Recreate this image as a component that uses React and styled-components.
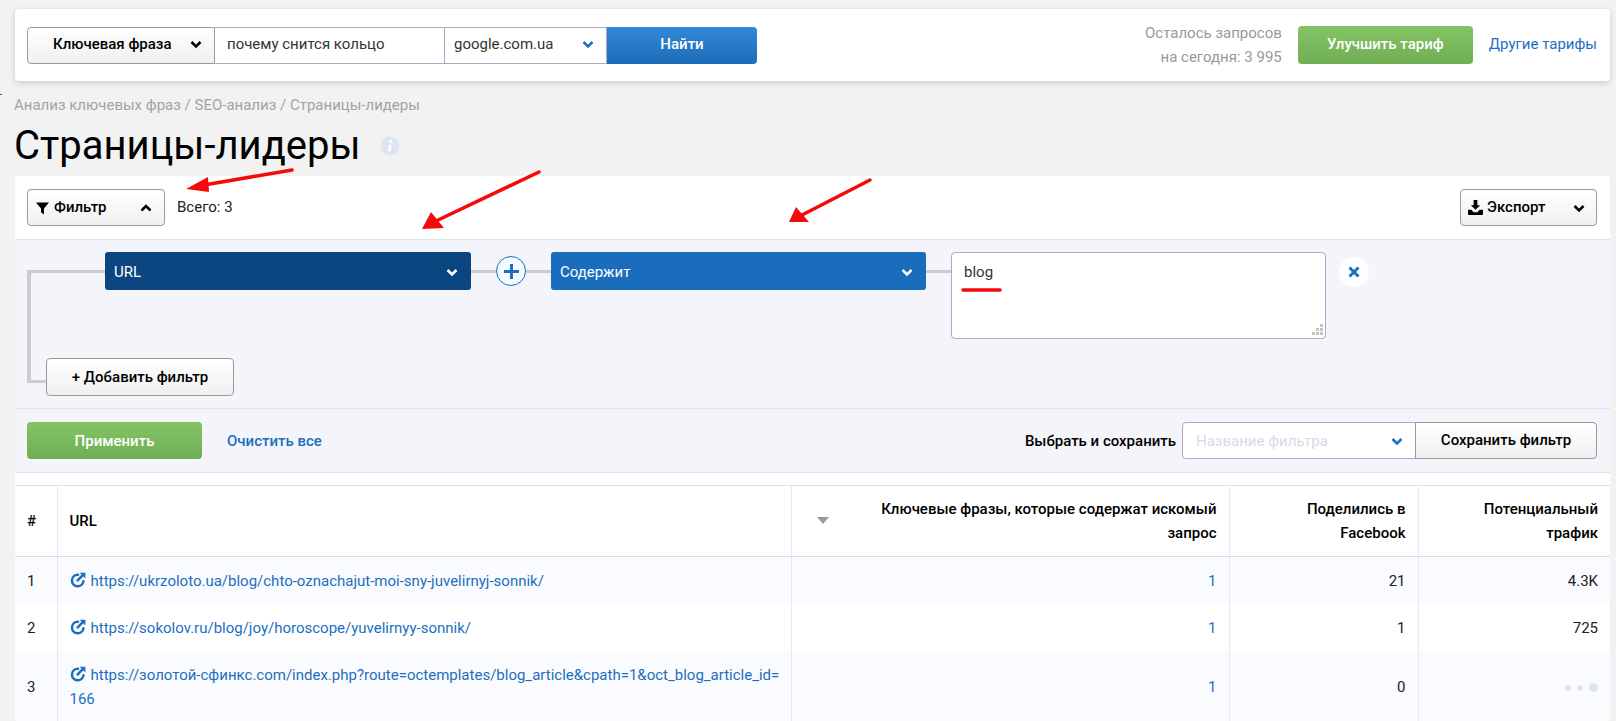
import React from 'react'
import styled, { createGlobalStyle, css } from 'styled-components'

const GlobalStyle = createGlobalStyle`
  html, body {
    margin: 0;
    height: 721px;
    overflow: hidden;
    background: #f2f2f2;
    font-family: Roboto, "Liberation Sans", sans-serif;
    font-size: 15px;
    color: #000;
  }
  * { box-sizing: border-box; }
`

const Page = styled.div`
  position: relative;
  height: 721px;
  padding: 9px 6px 0 15px;
  overflow: hidden;
`

const Tick = styled.i`
  position: absolute;
  left: 0;
  top: 94px;
  width: 2px;
  height: 1px;
  background: #1c6fbf;
`

const TopBar = styled.header`
  display: flex;
  align-items: center;
  height: 72px;
  padding: 0 13px 0 12px;
  background: #fff;
  border-radius: 4px;
  box-shadow: 0 2px 6px rgba(0, 0, 0, 0.16);
`

const SearchGroup = styled.div`
  display: flex;
  height: 37px;
`

const buttonBase = css`
  display: flex;
  align-items: center;
  background: linear-gradient(#fff, #f0f0f0);
  border: 1px solid #9a9a9a;
  border-radius: 4px;
  font-weight: 500;
  color: #000;
`

const TypeSelect = styled.div`
  ${buttonBase}
  width: 188px;
  padding: 0 12px 2px 25px;
  justify-content: space-between;
  border-radius: 4px 0 0 4px;
`

const fieldBase = css`
  display: flex;
  align-items: center;
  background: #fff;
  border: 1px solid #a7acc4;
  border-left: 0;
`

const QueryField = styled.div`
  ${fieldBase}
  width: 230px;
  padding: 0 0 2px 12px;
  color: #333;
`

const EngineSelect = styled.div`
  ${fieldBase}
  width: 162px;
  padding: 0 12px 2px 9px;
  justify-content: space-between;
  color: #333;
`

const greenGradient = 'linear-gradient(#84c365, #6fae53)'

const FindButton = styled.div`
  display: flex;
  align-items: center;
  justify-content: center;
  width: 150px;
  padding-bottom: 2px;
  background: linear-gradient(#3488d8, #1c6cb8);
  border-radius: 0 4px 4px 0;
  color: #fff;
  font-weight: 500;
`

const TopRight = styled.div`
  display: flex;
  align-items: center;
  margin-left: auto;
`

const Quota = styled.div`
  text-align: right;
  line-height: 24px;
  color: #999;
`

const UpgradeButton = styled.div`
  display: flex;
  align-items: center;
  justify-content: center;
  width: 175px;
  height: 38px;
  margin: 0 16px 0 16px;
  padding-bottom: 2px;
  background: ${greenGradient};
  border-radius: 4px;
  color: #fff;
  font-weight: 500;
`

const PlansLink = styled.span`
  margin-bottom: 2px;
  color: #1c6fbf;
`

const Breadcrumbs = styled.div`
  margin: 14px 0 0 -1px;
  line-height: 20px;
  color: #a3a3a3;
`

const TitleRow = styled.div`
  display: flex;
  align-items: center;
  height: 54px;
  margin: 4px 0 3px -1px;
`

const Title = styled.h1`
  margin: 0 19px 0 0;
  font-size: 40px;
  font-weight: 400;
  line-height: 44px;
`

const Card = styled.section`
  height: 545px;
  background: #fff;
  border-radius: 4px;
  overflow: hidden;
`

const CardHead = styled.div`
  display: flex;
  align-items: center;
  height: 63px;
  padding: 0 13px 0 12px;
`

const DropButton = styled.div`
  ${buttonBase}
  width: ${props => props.$width}px;
  height: 37px;
  padding: 0 ${props => props.$right}px 0 ${props => props.$left}px;
`

const DropLabel = styled.span`
  flex: 1;
  margin: 0 0 2px ${props => props.$gap}px;
`

const Total = styled.span`
  margin: 0 0 2px 12px;
  color: #222;
`

const HeadSpacer = styled.div`
  flex: 1;
`

const FilterPanel = styled.div`
  background: #f3f5fa;
  border-top: 1px solid #dde4f0;
  border-bottom: 1px solid #dde4f0;
`

const FilterBody = styled.div`
  position: relative;
  height: 169px;
  padding: 12px 0 0 90px;
  border-bottom: 1px solid #dde4f0;

  &::before {
    content: '';
    position: absolute;
    left: 12px;
    top: 30px;
    width: 80px;
    height: 3px;
    background: #ccc;
  }

  &::after {
    content: '';
    position: absolute;
    left: 12px;
    top: 30px;
    width: 20px;
    height: 110px;
    border-left: 4px solid #ccc;
    border-bottom: 3px solid #ccc;
  }
`

const RuleRow = styled.div`
  display: flex;
  align-items: flex-start;
  position: relative;
  z-index: 1;
`

const RuleSelect = styled.div`
  display: flex;
  align-items: center;
  justify-content: space-between;
  width: ${props => props.$width}px;
  height: 38px;
  padding: 1px 13px 0 9px;
  background: ${props => props.$color};
  border-radius: 3px;
  color: #fff;
`

const Dash = styled.div`
  flex: none;
  width: ${props => props.$width}px;
  height: 3px;
  margin-top: 18px;
  background: #ccc;
`

const PlusButton = styled.div`
  display: flex;
  align-items: center;
  justify-content: center;
  flex: none;
  width: 30px;
  height: 30px;
  margin-top: 4px;
  background: #f4faff;
  border: 1px solid #1c6fbf;
  border-radius: 50%;
`

const ValueBox = styled.div`
  position: relative;
  width: 375px;
  height: 87px;
  padding: 9px 12px;
  background: #fff;
  border: 1px solid #a7acc4;
  border-radius: 4px;
  line-height: 20px;
  color: #333;
`

const ResizeGrip = styled.svg`
  position: absolute;
  right: 2px;
  bottom: 2px;
`

const RemoveButton = styled.div`
  display: flex;
  align-items: center;
  justify-content: center;
  width: 30px;
  height: 30px;
  margin: 5px 0 0 13px;
  background: #fff;
  border-radius: 50%;
`

const AddFilter = styled.div`
  ${buttonBase}
  position: absolute;
  left: 31px;
  top: 118px;
  z-index: 1;
  justify-content: center;
  width: 188px;
  height: 38px;
`

const FilterFooter = styled.div`
  display: flex;
  align-items: center;
  height: 63px;
  padding: 0 13px 0 12px;
`

const ApplyButton = styled.div`
  display: flex;
  align-items: center;
  justify-content: center;
  width: 175px;
  height: 37px;
  background: ${greenGradient};
  border-radius: 4px;
  color: #fff;
  font-weight: 500;
`

const ClearLink = styled.span`
  margin-left: 25px;
  color: #1c6fbf;
  font-weight: 500;
`

const SaveLabel = styled.span`
  margin: 0 6px 0 auto;
  font-weight: 500;
`

const SaveGroup = styled.div`
  display: flex;
  height: 37px;
`

const FilterName = styled.div`
  display: flex;
  align-items: center;
  justify-content: space-between;
  width: 234px;
  padding: 0 12px 0 13px;
  background: #fff;
  border: 1px solid #a7acc4;
  border-radius: 4px 0 0 4px;
  color: #d5dae8;
`

const SaveButton = styled.div`
  ${buttonBase}
  justify-content: center;
  width: 182px;
  margin-left: -1px;
  padding-bottom: 2px;
  border-radius: 0 4px 4px 0;
`

const Table = styled.table`
  width: 100%;
  margin-top: 12px;
  border-collapse: collapse;
  table-layout: fixed;
  border-top: 1px solid #d8dff0;
  line-height: 24px;
`

const Th = styled.th`
  height: 71px;
  padding: 11px 12px;
  border-left: 1px solid #e3e8f4;
  border-bottom: 1px solid #d3dbef;
  font-weight: 500;
  text-align: ${props => props.$align || 'left'};
  vertical-align: middle;

  &:first-child {
    border-left: 0;
  }
`

const SortCell = styled(Th)`
  position: relative;
  padding-left: 48px;
`

const NarrowHead = styled(Th)`
  padding-left: 40px;
`

const SortMark = styled.i`
  position: absolute;
  left: 25px;
  top: 31px;
  border-style: solid;
  border-width: 7px 6px 0;
  border-color: #999 transparent transparent;
`

const Row = styled.tr`
  background: ${props => (props.$odd ? '#fafbfe' : '#fff')};
`

const Td = styled.td`
  padding: 11.5px 12px;
  border-left: 1px solid #e3e8f4;
  text-align: ${props => props.$align || 'left'};
  color: ${props => props.$color || '#222'};

  &:first-child {
    border-left: 0;
  }
`

const UrlCell = styled(Td)`
  padding-right: 6px;
  word-break: break-all;
`

const UrlLink = styled.a`
  color: #1c6fbf;
`

const LinkIcon = styled.svg`
  margin-right: 5px;
  vertical-align: -2px;
`

const LoadingDots = styled.span`
  display: inline-flex;
  align-items: center;
  gap: 6px;
  vertical-align: middle;
`

const Dot = styled.i`
  display: block;
  width: ${props => props.$size}px;
  height: ${props => props.$size}px;
  background: #dfe4f2;
  border-radius: 50%;
`

const Annotations = styled.svg`
  position: absolute;
  left: 0;
  top: 0;
  z-index: 5;
  pointer-events: none;
`

const Chevron = ({ up, color = '#000', size = 12 }) => (
  <svg width={size} height={size} viewBox="0 0 12 12" fill="none">
    <path
      d={up ? 'M1.5 8.5 6 4l4.5 4.5' : 'M1.5 4 6 8.5 10.5 4'}
      stroke={color}
      strokeWidth="2.500"
    />
  </svg>
)

const ExternalIcon = () => (
  <LinkIcon width="16" height="16" viewBox="0 0 15 15" fill="none">
    <path
      d="M7.5 2.6A5.4 5.4 0 1 0 12.6 8.8"
      stroke="#1c6fbf"
      strokeWidth="2.400"
      strokeLinecap="round"
    />
    <path d="M6.5 8.6 12 3" stroke="#1c6fbf" strokeWidth="2.400" />
    <path d="M9 .8h5.4v5.4z" fill="#1c6fbf" />
  </LinkIcon>
)

const rows = [
  { id: 1, url: 'https://ukrzoloto.ua/blog/chto-oznachajut-moi-sny-juvelirnyj-sonnik/', shares: 21, traffic: '4.3K' },
  { id: 2, url: 'https://sokolov.ru/blog/joy/horoscope/yuvelirnyy-sonnik/', shares: 1, traffic: '725' },
  { id: 3, url: 'https://золотой-сфинкс.com/index.php?route=octemplates/blog_article&cpath=1&oct_blog_article_id=166', shares: 0 }
]

const arrows = [
  'M292 170 204 185',
  'M539 172 436 221',
  'M870 180 802 215'
]

export default function App () {
  return (
    <Page>
      <GlobalStyle />
      <Tick />
      <TopBar>
        <SearchGroup>
          <TypeSelect>Ключевая фраза<Chevron /></TypeSelect>
          <QueryField>почему снится кольцо</QueryField>
          <EngineSelect>google.com.ua<Chevron color="#1c6fbf" /></EngineSelect>
          <FindButton>Найти</FindButton>
        </SearchGroup>
        <TopRight>
          <Quota>Осталось запросов<br />на сегодня: 3 995</Quota>
          <UpgradeButton>Улучшить тариф</UpgradeButton>
          <PlansLink>Другие тарифы</PlansLink>
        </TopRight>
      </TopBar>

      <Breadcrumbs>Анализ ключевых фраз / SEO-анализ / Страницы-лидеры</Breadcrumbs>
      <TitleRow>
        <Title>Страницы-лидеры</Title>
        <svg width="20" height="20" viewBox="0 0 20 20">
          <circle cx="10" cy="10" r="9.5" fill="#dfe4f2" />
          <circle cx="10.8" cy="5.6" r="1.6" fill="#fff" />
          <path d="M8 9h3.6l-1.3 5.4h1.2l-.2 1H7.800l1.200-5.400H7.800z" fill="#fff" />
        </svg>
      </TitleRow>

      <Card>
        <CardHead>
          <DropButton $width={138} $left={8} $right={12}>
            <svg width="13" height="14" viewBox="0 0 14 14">
              <path d="M0 1h14L8.600 7.500V14L5.400 11.500V7.500z" fill="#000" />
            </svg>
            <DropLabel $gap={5}>Фильтр</DropLabel>
            <Chevron up />
          </DropButton>
          <Total>Всего: 3</Total>
          <HeadSpacer />
          <DropButton $width={137} $left={7} $right={11}>
            <svg width="15" height="15" viewBox="0 0 16 16">
              <path d="M6 0h4v5.500h3L8 10.500 3 5.500h3z" fill="#000" />
              <path d="M0 10.500h3.500L6 13h4l2.500-2.500H16V15a1 1 0 0 1-1 1H1a1 1 0 0 1-1-1z" fill="#000" />
            </svg>
            <DropLabel $gap={4}>Экспорт</DropLabel>
            <Chevron />
          </DropButton>
        </CardHead>

        <FilterPanel>
          <FilterBody>
            <RuleRow>
              <RuleSelect $width={366} $color="#0c4680">URL<Chevron color="#fff" /></RuleSelect>
              <Dash $width={25} />
              <PlusButton>
                <svg width="17" height="17" viewBox="0 0 17 17">
                  <path d="M8.500 1v15M1 8.500h15" stroke="#1c6fbf" strokeWidth="3" />
                </svg>
              </PlusButton>
              <Dash $width={25} />
              <RuleSelect $width={375} $color="#1a6dbc">Содержит<Chevron color="#fff" /></RuleSelect>
              <Dash $width={25} />
              <ValueBox>
                blog
                <ResizeGrip width="12" height="12" viewBox="0 0 12 12">
                  <path d="M9 0h3v3H9zM5 4h3v3H5zM9 4h3v3H9zM1 8h3v3H1zM5 8h3v3H5zM9 8h3v3H9z" fill="#c4c4c4" />
                </ResizeGrip>
              </ValueBox>
              <RemoveButton>
                <svg width="12" height="12" viewBox="0 0 12 12">
                  <path d="M1.500 1.500l9 9M10.500 1.500l-9 9" stroke="#1c6fbf" strokeWidth="3" />
                </svg>
              </RemoveButton>
            </RuleRow>
            <AddFilter>+ Добавить фильтр</AddFilter>
          </FilterBody>

          <FilterFooter>
            <ApplyButton>Применить</ApplyButton>
            <ClearLink>Очистить все</ClearLink>
            <SaveLabel>Выбрать и сохранить</SaveLabel>
            <SaveGroup>
              <FilterName>Название фильтра<Chevron color="#1c6fbf" /></FilterName>
              <SaveButton>Сохранить фильтр</SaveButton>
            </SaveGroup>
          </FilterFooter>
        </FilterPanel>

        <Table>
          <colgroup>
            <col width="42" />
            <col width="734" />
            <col width="438" />
            <col width="189" />
            <col width="192" />
          </colgroup>
          <thead>
            <tr>
              <Th>#</Th>
              <Th>URL</Th>
              <SortCell $align="right"><SortMark />Ключевые фразы, которые содержат искомый запрос</SortCell>
              <NarrowHead $align="right">Поделились в Facebook</NarrowHead>
              <NarrowHead $align="right">Потенциальный трафик</NarrowHead>
            </tr>
          </thead>
          <tbody>
            {rows.map(row => (
              <Row key={row.id} $odd={row.id % 2 === 1}>
                <Td>{row.id}</Td>
                <UrlCell><ExternalIcon /><UrlLink>{row.url}</UrlLink></UrlCell>
                <Td $align="right" $color="#1c6fbf">1</Td>
                <Td $align="right">{row.shares}</Td>
                <Td $align="right">
                  {row.traffic || (
                    <LoadingDots>
                      <Dot $size={6} />
                      <Dot $size={6} />
                      <Dot $size={9} />
                    </LoadingDots>
                  )}
                </Td>
              </Row>
            ))}
          </tbody>
        </Table>
      </Card>

      <Annotations width="1616" height="721" viewBox="0 0 1616 721" fill="none">
        {arrows.map(d => (
          <path key={d} d={d} stroke="#f40a0a" strokeWidth="3.500" strokeLinecap="round" />
        ))}
        <path d="M186 189 208 177 209 192z" fill="#f40a0a" />
        <path d="M422 229 431 212 444 228z" fill="#f40a0a" />
        <path d="M789 222 796 207 809 222z" fill="#f40a0a" />
        <path d="M963 290H1000" stroke="#f40a0a" strokeWidth="3.500" strokeLinecap="round" />
      </Annotations>
    </Page>
  )
}
